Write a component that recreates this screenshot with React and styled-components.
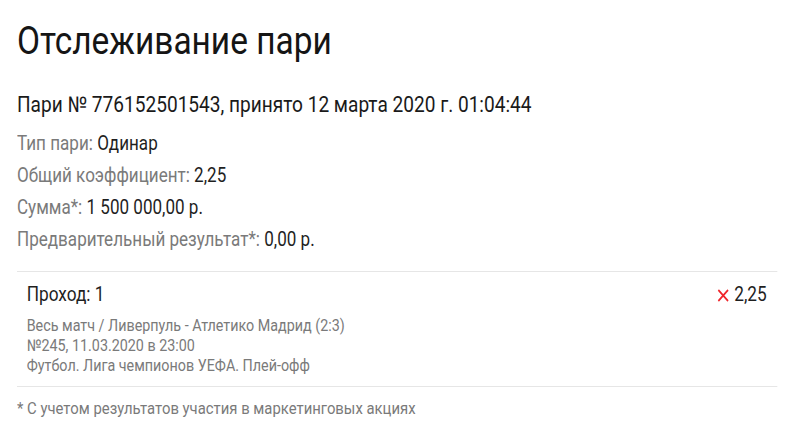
import React from "react";
import styled, { createGlobalStyle } from "styled-components";

// --- Data --- //

const details = [
  { label: "Тип пари:", value: "Одинар" },
  { label: "Общий коэффициент:", value: "2,25" },
  { label: "Сумма*:", value: "1 500 000,00 р." },
  { label: "Предварительный результат*:", value: "0,00 р." },
];

const bet = {
  outcome: "Проход: 1",
  odds: "2,25",
  lines: [
    "Весь матч / Ливерпуль - Атлетико Мадрид (2:3)",
    "№245, 11.03.2020 в 23:00",
    "Футбол. Лига чемпионов УЕФА. Плей-офф",
  ],
};

// --- Components --- //

const LostIcon = () => (
  <svg width="15" height="15" viewBox="0 0 15 15">
    <path d="M2 2 L13 13 M13 2 L2 13" stroke="#f0262b" strokeWidth="1.8" />
  </svg>
);

const App = () => {
  return (
    <>
      <GlobalStyle />
      <Page>
        <Title>Отслеживание пари</Title>
        <Heading>Пари № 776152501543, принято 12 марта 2020 г. 01:04:44</Heading>
        <Details>
          {details.map((d) => (
            <DetailRow key={d.label}>
              <Label>{d.label}</Label> <Value>{d.value}</Value>
            </DetailRow>
          ))}
        </Details>
        <BetCard>
          <BetHead>
            <span>{bet.outcome}</span>
            <Odds>
              <LostIcon />
              {bet.odds}
            </Odds>
          </BetHead>
          <BetInfo>
            {bet.lines.map((l) => (
              <div key={l}>{l}</div>
            ))}
          </BetInfo>
        </BetCard>
        <Footnote>* С учетом результатов участия в маркетинговых акциях</Footnote>
      </Page>
    </>
  );
};

export default App;

// --- Styles --- //

const GlobalStyle = createGlobalStyle`
  body {
    margin: 0;
    background: #fff;
    font-family: "Roboto", sans-serif;
    color: #222;
  }
`;

// condensed look: whole page is squeezed horizontally
const Page = styled.div`
  width: 864px;
  margin-left: 17px;
  padding-top: 17px;
  transform: scaleX(0.88);
  transform-origin: 0 0;
`;

const Title = styled.h1`
  margin: 0;
  font-size: 38px;
  font-weight: 400;
  line-height: 48px;
  color: #151515;
`;

const Heading = styled.div`
  margin-top: 27px;
  font-size: 21.7px;
  line-height: 26px;
  color: #1a1a1a;
`;

const Details = styled.div`
  margin-top: 10px;
  display: flex;
  flex-direction: column;
`;

const DetailRow = styled.div`
  font-size: 19.4px;
  line-height: 32px;
`;

const Label = styled.span`
  color: #7a7a7a;
`;

const Value = styled.span`
  color: #1f1f1f;
`;

const BetCard = styled.div`
  margin-top: 15px;
  border-top: 1px solid #e6e6e6;
  border-bottom: 1px solid #e6e6e6;
  padding: 12px 12px 10px 11px;
`;

const BetHead = styled.div`
  display: flex;
  justify-content: space-between;
  align-items: center;
  font-size: 19.6px;
  line-height: 22px;
  color: #1f1f1f;
`;

const Odds = styled.span`
  display: flex;
  align-items: center;
  gap: 5px;
`;

const BetInfo = styled.div`
  margin-top: 10px;
  font-size: 16.3px;
  line-height: 20px;
  color: #7a7a7a;
`;

const Footnote = styled.div`
  margin-top: 12px;
  font-size: 16.9px;
  line-height: 18px;
  color: #7a7a7a;
`;
